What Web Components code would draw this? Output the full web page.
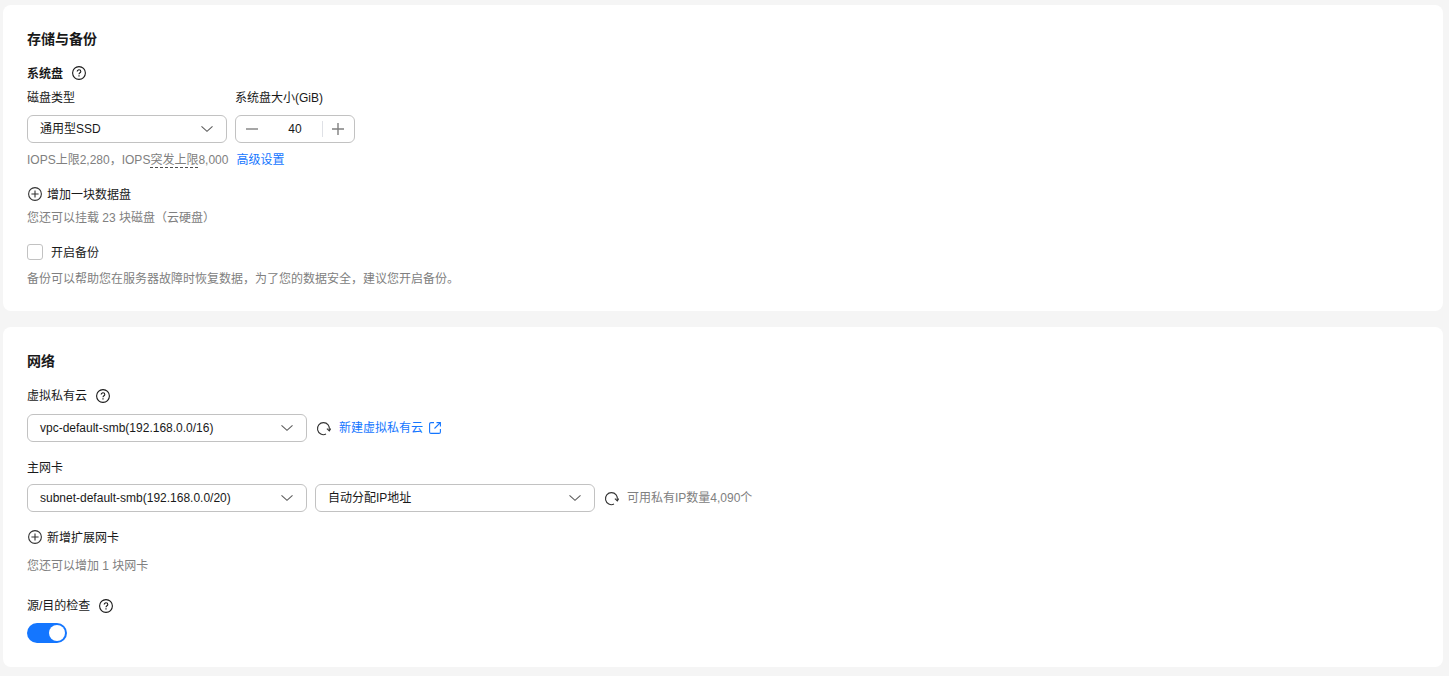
<!DOCTYPE html>
<html lang="zh">
<head>
<meta charset="utf-8">
<style>
  html, body { margin: 0; background: #f5f5f5; }
  body {
    padding: 5px 6px 9px 3px;
    font: 12px/20px "Liberation Sans", "Noto Sans CJK SC", sans-serif;
    color: #191919;
  }
  .row { display: flex; align-items: center; }
  .gap8 { gap: 8px; }
</style>
</head>
<body>
<x-card heading="存储与备份" style="height: 306px; margin-bottom: 16px">
  <x-label bold help style="margin-top: 14px">系统盘</x-label>
  <div style="display: flex; gap: 8px; margin-top: 4px">
    <div>
      <x-label>磁盘类型</x-label>
      <x-select width="200" style="margin-top: 8px">通用型SSD</x-select>
    </div>
    <div>
      <x-label>系统盘大小(GiB)</x-label>
      <x-stepper value="40" style="margin-top: 8px"></x-stepper>
    </div>
  </div>
  <x-hint style="margin-top: 6px">IOPS上限2,280，IOPS<x-dashed>突发上限</x-dashed>8,000<x-link style="margin-left: 8px">高级设置</x-link></x-hint>
  <x-add style="margin-top: 15px">增加一块数据盘</x-add>
  <x-hint style="margin-top: 3px">您还可以挂载 23 块磁盘（云硬盘）</x-hint>
  <x-checkbox style="margin-top: 15px">开启备份</x-checkbox>
  <x-hint style="margin-top: 6px">备份可以帮助您在服务器故障时恢复数据，为了您的数据安全，建议您开启备份。</x-hint>
</x-card>
<x-card heading="网络" style="height: 340px">
  <x-label help style="margin-top: 14px; --help-shift: 2px">虚拟私有云</x-label>
  <div class="row" style="margin-top: 9px">
    <x-select width="280">vpc-default-smb(192.168.0.0/16)</x-select>
    <x-refresh style="margin-left: 9px"></x-refresh>
    <x-link external style="margin-left: 8px">新建虚拟私有云</x-link>
  </div>
  <x-label style="margin-top: 15px">主网卡</x-label>
  <div class="row gap8" style="margin-top: 7px">
    <x-select width="280">subnet-default-smb(192.168.0.0/20)</x-select>
    <x-select width="280">自动分配IP地址</x-select>
    <x-refresh style="margin-left: 1px"></x-refresh>
    <x-hint style="padding-top: 0">可用私有IP数量4,090个</x-hint>
  </div>
  <x-add style="margin-top: 15px">新增扩展网卡</x-add>
  <x-hint style="margin-top: 8px">您还可以增加 1 块网卡</x-hint>
  <x-label help style="margin-top: 20px; --help-shift: 2px">源/目的检查</x-label>
  <x-switch style="margin-top: 8px"></x-switch>
</x-card>

<script>
class BaseElement extends HTMLElement {
  constructor() {
    super();
    this.attachShadow({ mode: 'open' });
  }

  connectedCallback() {
    this.shadowRoot.innerHTML = this.template();
  }
}

const CHEVRON = `<svg width="14" height="14" viewBox="0 0 14 14" fill="none" stroke="#5c5c5c" stroke-width="1.1" style="overflow: visible"><path d="M2.5 4.3 8 9.3l5.5-5"/></svg>`;

class XCard extends BaseElement {
  template() {
    return `
      <style>
        :host { display: block; box-sizing: border-box; padding: 24px; background: #fff; border-radius: 8px; }
        h2 { margin: 0; font-size: 14px; line-height: 20px; font-weight: 700; color: #191919; }
      </style>
      <h2>${this.getAttribute('heading')}</h2>
      <slot></slot>`;
  }
}

class XLabel extends BaseElement {
  template() {
    const help = this.hasAttribute('help') ? '<x-help></x-help>' : '';
    return `
      <style>
        :host { display: flex; align-items: center; gap: 9px; height: 20px; color: #191919; }
        :host([bold]) { font-weight: 700; }
        span { padding-top: 2px; }
        x-help { margin-top: var(--help-shift, 0); }
      </style>
      <span><slot></slot></span>${help}`;
  }
}

class XHelp extends BaseElement {
  template() {
    return `
      <style>
        :host { display: inline-flex; width: 14px; height: 14px; }
      </style>
      <svg width="14" height="14" viewBox="0 0 14 14" fill="none" stroke="#191919" stroke-width="1.1">
        <circle cx="7" cy="7" r="6.4"/>
        <path d="M5.2 5.6c0-1 .8-1.8 1.8-1.8s1.8.7 1.8 1.6c0 1.4-1.8 1.3-1.8 2.9"/>
        <path d="M7 9.3v1.2" stroke-width="1.2"/>
      </svg>`;
  }
}

class XSelect extends BaseElement {
  template() {
    return `
      <style>
        :host { display: flex; box-sizing: border-box; align-items: center; justify-content: space-between; width: ${this.getAttribute('width')}px; height: 28px; padding: 0 13px 0 12px; background: #fff; border: 1px solid #c2c2c2; border-radius: 6px; color: #191919; }
        svg { display: block; }
      </style>
      <span><slot></slot></span>${CHEVRON}`;
  }
}

class XStepper extends BaseElement {
  template() {
    return `
      <style>
        :host { display: flex; box-sizing: border-box; align-items: center; width: 120px; height: 28px; background: #fff; border: 1px solid #c2c2c2; border-radius: 6px; color: #191919; }
        .btn { display: flex; align-items: center; justify-content: center; box-sizing: border-box; width: 32px; height: 16px; }
        .btn:first-child { border-right: 1px solid #dfe1e6; }
        .btn:last-child { border-left: 1px solid #dfe1e6; padding-right: 2px; }
        .value { flex: 1; text-align: center; }
      </style>
      <div class="btn"><svg width="12" height="12" viewBox="0 0 12 12" stroke="#808080" stroke-width="1.4"><path d="M0 6h12"/></svg></div>
      <div class="value">${this.getAttribute('value')}</div>
      <div class="btn"><svg width="12" height="12" viewBox="0 0 12 12" stroke="#808080" stroke-width="1.4"><path d="M0 6h12M6 0v12"/></svg></div>`;
  }
}

class XHint extends BaseElement {
  template() {
    return `
      <style>
        :host { display: block; box-sizing: border-box; height: 20px; padding-top: 1px; color: #808080; }
      </style>
      <slot></slot>`;
  }
}

class XDashed extends BaseElement {
  template() {
    return `
      <style>
        :host { display: inline-block; height: 17px; border-bottom: 1px dashed #4d4d4d; }
      </style>
      <slot></slot>`;
  }
}

class XLink extends BaseElement {
  template() {
    const icon = this.hasAttribute('external')
      ? `<svg width="12" height="12" viewBox="0 0 12 12" fill="none" stroke="#1476ff" stroke-width="1.1"><path d="M5 .6H2A1.4 1.4 0 0 0 .6 2v8A1.4 1.4 0 0 0 2 11.4h8a1.4 1.4 0 0 0 1.4-1.4V7"/><path d="M7.5.6h3.9v3.9M11.4.6 5.5 6.5"/></svg>`
      : '';
    return `
      <style>
        :host { display: inline-flex; align-items: center; gap: 6px; color: #1476ff; }
      </style>
      <span><slot></slot></span>${icon}`;
  }
}

class XAdd extends BaseElement {
  template() {
    return `
      <style>
        :host { display: flex; align-items: center; gap: 5px; height: 20px; color: #191919; }
        svg { margin-left: 1px; }
        span { padding-top: 2px; }
      </style>
      <svg width="14" height="14" viewBox="0 0 14 14" fill="none" stroke="#333" stroke-width="1.1"><circle cx="7" cy="7" r="6.4"/><path d="M3.4 7h7.2M7 3.4v7.2"/></svg>
      <span><slot></slot></span>`;
  }
}

class XCheckbox extends BaseElement {
  template() {
    return `
      <style>
        :host { display: flex; align-items: center; gap: 8px; height: 20px; color: #191919; }
        .box { box-sizing: border-box; width: 16px; height: 16px; border: 1px solid #c2c2c2; border-radius: 3px; background: #fff; }
        span { padding-top: 2px; }
      </style>
      <div class="box"></div>
      <span><slot></slot></span>`;
  }
}

class XRefresh extends BaseElement {
  template() {
    return `
      <style>
        :host { display: inline-flex; width: 15px; height: 15px; }
      </style>
      <svg width="15" height="15" viewBox="0 0 15 15" fill="none" stroke="#333" stroke-width="1.1"><path d="M10 13.1A6 6 0 1 1 13.3 9"/><path d="M10.9 7.6l2.4 2.3 1.5-2.4"/></svg>`;
  }
}

class XSwitch extends BaseElement {
  template() {
    return `
      <style>
        :host { display: flex; justify-content: flex-end; box-sizing: border-box; align-items: center; width: 40px; height: 20px; padding: 0 2px; background: #1476ff; border-radius: 10px; }
        .knob { width: 16px; height: 16px; border-radius: 50%; background: #fff; }
      </style>
      <div class="knob"></div>`;
  }
}

customElements.define('x-card', XCard);
customElements.define('x-label', XLabel);
customElements.define('x-help', XHelp);
customElements.define('x-select', XSelect);
customElements.define('x-stepper', XStepper);
customElements.define('x-hint', XHint);
customElements.define('x-dashed', XDashed);
customElements.define('x-link', XLink);
customElements.define('x-add', XAdd);
customElements.define('x-checkbox', XCheckbox);
customElements.define('x-refresh', XRefresh);
customElements.define('x-switch', XSwitch);
</script>
</body>
</html>
